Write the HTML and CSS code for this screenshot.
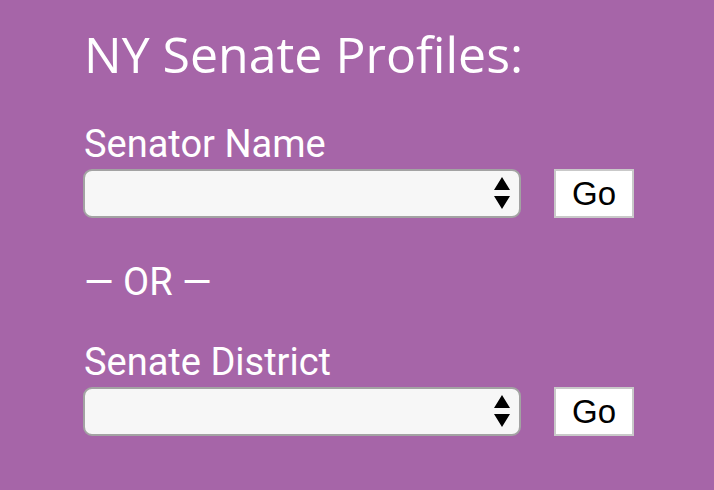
FILE: index.html
```html
<!DOCTYPE html>
<html>
<head>
<meta charset="utf-8">
<link rel="stylesheet" href="styles.css">
</head>
<body>
<div class="panel">
  <h1 class="title">NY Senate Profiles:</h1>
  <div class="field first">
    <label class="label">Senator Name</label>
    <div class="row">
      <div class="select-wrap">
        <select class="select"><option></option></select>
        <svg class="arrows" width="16" height="32" viewBox="0 0 16 32"><path d="M8 0 L16 13 L0 13 Z M0 19 L16 19 L8 32 Z" fill="#000"/></svg>
      </div>
      <button class="go">Go</button>
    </div>
  </div>
  <div class="or">— OR —</div>
  <div class="field second">
    <label class="label">Senate District</label>
    <div class="row">
      <div class="select-wrap">
        <select class="select"><option></option></select>
        <svg class="arrows" width="16" height="32" viewBox="0 0 16 32"><path d="M8 0 L16 13 L0 13 Z M0 19 L16 19 L8 32 Z" fill="#000"/></svg>
      </div>
      <button class="go">Go</button>
    </div>
  </div>
</div>
</body>
</html>
```
FILE: styles.css
```css
html, body {
  margin: 0;
  padding: 0;
  background: #a665a8;
  height: 100%;
}
.panel {
  padding: 24px 0 0 84px;
  display: flex;
  flex-direction: column;
}
.title {
  margin: 0;
  font-family: "Open Sans", sans-serif;
  font-weight: 400;
  font-size: 50px;
  line-height: 60px;
  color: #fff;
}
.field {
  display: flex;
  flex-direction: column;
  gap: 3px;
}
.field.first {
  margin-top: 38px;
}
.field.second {
  margin-top: 36px;
}
.label {
  font-family: Roboto, sans-serif;
  font-size: 38px;
  line-height: 44px;
  color: #fff;
}
.row {
  display: flex;
  align-items: center;
  gap: 33px;
}
.select-wrap {
  position: relative;
  width: 438px;
  height: 49px;
  margin-left: -1px;
}
.select {
  appearance: none;
  -webkit-appearance: none;
  width: 100%;
  height: 100%;
  box-sizing: border-box;
  border: 2px solid #a3a3a3;
  border-radius: 9px;
  background: #f7f7f7;
  margin: 0;
}
.arrows {
  position: absolute;
  right: 11px;
  top: 8px;
}
.go {
  width: 80px;
  height: 49px;
  box-sizing: border-box;
  background: #fff;
  border: 2px solid #c9c9c9;
  border-radius: 0;
  font-family: "Liberation Sans", Arial, sans-serif;
  font-size: 33px;
  color: #000;
  padding: 0;
  margin: 0;
}
.or {
  margin-top: 42px;
  font-family: Roboto, sans-serif;
  font-size: 38px;
  line-height: 44px;
  color: #fff;
}
```
